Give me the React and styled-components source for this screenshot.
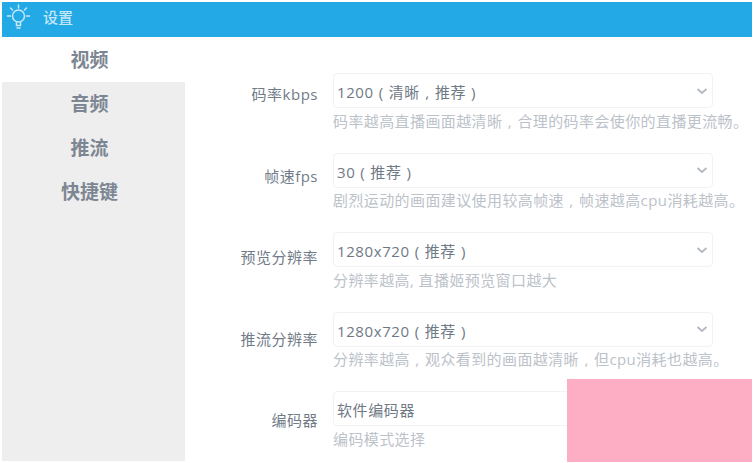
import React from "react";
import styled, { createGlobalStyle } from "styled-components";

const Global = createGlobalStyle`
  html, body { margin: 0; padding: 0; background: #fff; }
  body { font-family: "Open Sans", "Noto Sans CJK SC", sans-serif; }
`;
const Page = styled.div`
  position: relative;
  width: 754px;
  height: 463px;
  padding: 2px 2px 2px;
  box-sizing: border-box;
  overflow: hidden;
  background: #fff;
  display: flex;
  flex-direction: column;
`;
const Header = styled.header`
  height: 35px;
  flex: none;
  box-sizing: border-box;
  background: #22a9e6;
  display: flex;
  align-items: center;
  gap: 11px;
  padding: 0 0 6px 4px;
  color: #c4e8f8;
  font-size: 15px;
  font-weight: 500;
`;
const Body = styled.div`
  flex: 1;
  display: flex;
  min-height: 0;
`;
const Sidebar = styled.nav`
  width: 183px;
  flex: none;
  background: #eeeeee;
  display: flex;
  flex-direction: column;
`;
const Tab = styled.div`
  height: ${(p) => (p.$active ? 45 : 44)}px;
  flex: none;
  box-sizing: border-box;
  padding-right: 8px;
  background: ${(p) => (p.$active ? "#fff" : "transparent")};
  color: #7d8793;
  font: 700 19px/${(p) => (p.$active ? 43 : 41)}px "Noto Sans CJK SC", sans-serif;
  text-align: center;
`;
const Form = styled.main`
  flex: 1;
  display: flex;
  flex-direction: column;
  gap: 14px;
  padding-top: 36px;
`;
const Row = styled.div`
  display: grid;
  grid-template-columns: 133px 380px;
  column-gap: 15px;
  height: 65.5px;
`;
const Label = styled.label`
  text-align: right;
  color: #717b88;
  font: 15px/20px "Open Sans", "Noto Sans CJK SC", sans-serif;
  letter-spacing: 0.5px;
  padding-top: ${(p) => p.$drop}px;
  white-space: nowrap;
`;
const Field = styled.div`
  display: flex;
  flex-direction: column;
  width: 380px;
`;
const Select = styled.div`
  height: 35px;
  box-sizing: border-box;
  border: 1px solid #f1f2f4;
  border-radius: 4px;
  display: flex;
  align-items: center;
  justify-content: space-between;
  padding: 0 4px 0 3px;
  color: #6f7986;
  font-size: 15px;
  letter-spacing: 0.6px;
`;
const SelectText = styled.span`
  padding-top: 2px;
`;
const Mark = styled.span`
  display: inline-block;
  width: 1em;
  text-align: center;
`;
const Hint = styled.div`
  width: 425px;
  color: #bcc2c9;
  font: 15px/20px "Open Sans", "Noto Sans CJK SC", sans-serif;
  letter-spacing: 0.4px;
  margin-top: 2.5px;
  white-space: nowrap;
`;
const Cover = styled.div`
  position: absolute;
  left: 567px;
  top: 379px;
  width: 185px;
  height: 83px;
  background: #fdaec4;
`;

const Bulb = () => (
  <svg width="26" height="28" viewBox="0 0 26 28" fill="none" stroke="#c4e8f8" strokeWidth="1.5" strokeLinecap="round">
    <circle cx="12.5" cy="13" r="6" />
    <path d="M10.5 19.5v3h4v-3M11 25h3" />
    <path d="M12.5 2v3M1.5 13h3M20.5 13h3M4.5 5l2 2M20.5 5l-2 2" />
  </svg>
);
const Chevron = () => (
  <svg width="12" height="12" viewBox="0 0 12 12" fill="none" stroke="#b3b9c1" strokeWidth="1.8">
    <path d="M1.5 4l4.5 4 4.5-4" />
  </svg>
);

const rows = [
  ["码率kbps", 11, "1200（清晰，推荐）", "码率越高直播画面越清晰，合理的码率会使你的直播更流畅。"],
  ["帧速fps", 13, "30（推荐）", "剧烈运动的画面建议使用较高帧速，帧速越高cpu消耗越高。"],
  ["预览分辨率", 15, "1280x720（推荐）", "分辨率越高, 直播姬预览窗口越大"],
  ["推流分辨率", 17, "1280x720（推荐）", "分辨率越高，观众看到的画面越清晰，但cpu消耗也越高。"],
  ["编码器", 19, "软件编码器", "编码模式选择"],
];

// The screenshot's font centres full-width punctuation in its cell.
const MARKS = { "（": "(", "）": ")", "，": "," };
const withMarks = (text) =>
  text.split(/([（），])/).map((part, i) =>
    MARKS[part] ? <Mark key={i}>{MARKS[part]}</Mark> : part
  );

export default function App() {
  return (
    <Page>
      <Global />
      <Header>
        <Bulb />
        <span>设置</span>
      </Header>
      <Body>
        <Sidebar>
          <Tab $active>视频</Tab>
          <Tab>音频</Tab>
          <Tab>推流</Tab>
          <Tab>快捷键</Tab>
        </Sidebar>
        <Form>
          {rows.map(([label, drop, value, hint]) => (
            <Row key={label}>
              <Label $drop={drop}>{label}</Label>
              <Field>
                <Select>
                  <SelectText>{withMarks(value)}</SelectText>
                  <Chevron />
                </Select>
                <Hint>{withMarks(hint)}</Hint>
              </Field>
            </Row>
          ))}
        </Form>
      </Body>
      <Cover />
    </Page>
  );
}
